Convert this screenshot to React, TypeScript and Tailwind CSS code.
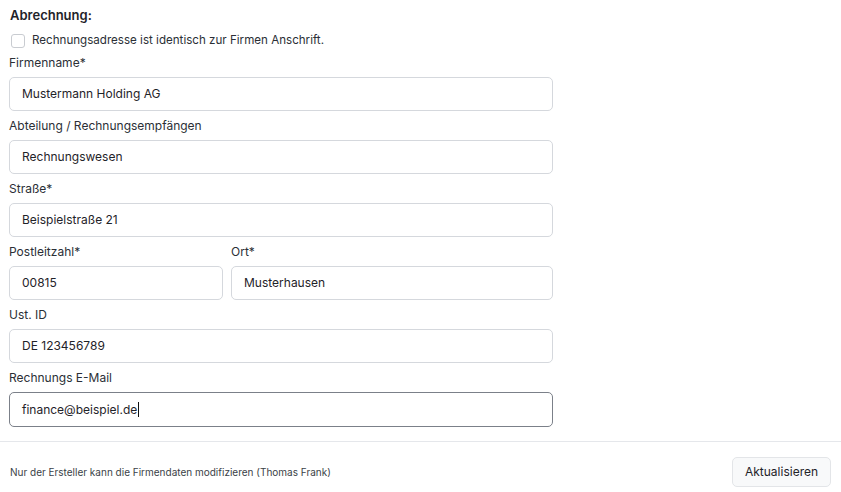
import React from "react";

function Field({ label, value, focused }: { label: string; value: string; focused?: boolean }) {
  return (
    <div className="flex flex-col">
      <div className="h-4 text-[12px] leading-4 text-[#2b2f36]">{label}</div>
      <div
        className={
          "mt-[6px] flex items-center rounded-[5px] border bg-white px-[12px] text-[12px] text-[#1f2329] " +
          (focused ? "h-[35px] border-[#7b8089]" : "h-[34px] border-[#d5d8dd]")
        }
      >
        {value}
        {focused && <span className="ml-[1px] inline-block h-[15px] w-[1px] bg-[#111]" />}
      </div>
    </div>
  );
}

export default function App() {
  return (
    <div
      className="h-[492px] w-[841px] bg-white"
      style={{ fontFamily: "Inter, 'Noto Sans', sans-serif" }}
    >
      <div className="w-[553px] pl-[9px] pt-[7px]">
        <div className="h-4 pl-[1px] text-[13px] font-semibold leading-4 text-[#1f2329]">Abrechnung:</div>
        <div className="mt-[9px] flex h-[18px] items-center gap-[7px] pl-[2px]">
          <div className="h-[14px] w-[14px] rounded-[3px] border border-[#c9ccd1] bg-white" />
          <span className="text-[11.6px] text-[#2b2f36]">Rechnungsadresse ist identisch zur Firmen Anschrift.</span>
        </div>
        <div className="mt-[5px] flex flex-col gap-[7px]">
          <Field label="Firmenname*" value="Mustermann Holding AG" />
          <Field label="Abteilung / Rechnungsempfängen" value="Rechnungswesen" />
          <Field label="Straße*" value="Beispielstraße 21" />
          <div className="grid grid-cols-[214px_1fr] gap-[8px]">
            <Field label="Postleitzahl*" value="00815" />
            <Field label="Ort*" value="Musterhausen" />
          </div>
          <Field label="Ust. ID" value="DE 123456789" />
          <Field label="Rechnungs E-Mail" value="finance@beispiel.de" focused />
        </div>
      </div>
      <div className="mt-[14px] border-t border-[#e5e7eb]" />
      <div className="flex items-center justify-between pl-[10px] pr-[10px] pt-[15px]">
        <span className="text-[10px] text-[#3a3f47]">Nur der Ersteller kann die Firmendaten modifizieren (Thomas Frank)</span>
        <button className="h-[30px] w-[99px] rounded-[5px] border border-[#e3e5e8] bg-[#f8f9fa] text-[12px] text-[#1f2329]">
          Aktualisieren
        </button>
      </div>
    </div>
  );
}
